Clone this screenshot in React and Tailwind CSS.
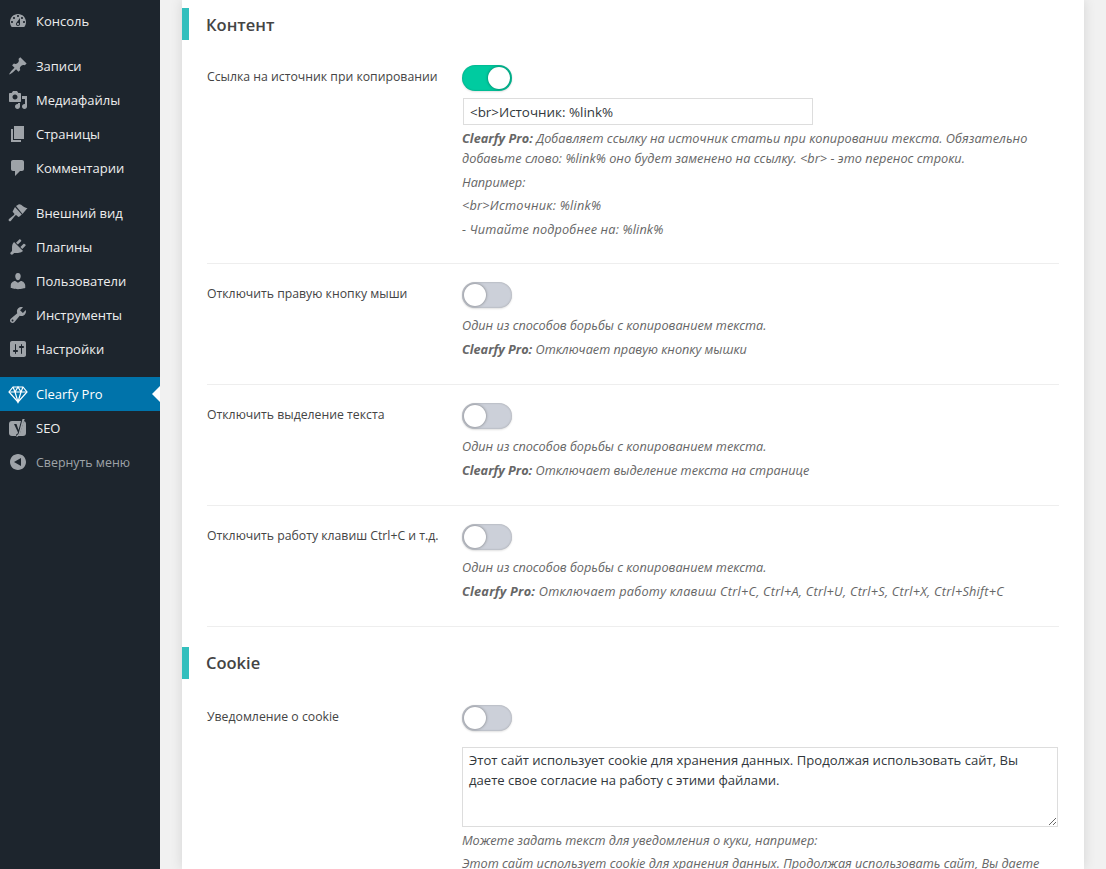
import React from "react";

const menuTop = [
  {
    label: "Консоль",
    d: "M3.76 16h12.48c1.1-1.37 1.76-3.11 1.76-5 0-4.42-3.58-8-8-8s-8 3.58-8 8c0 1.89.66 3.63 1.76 5zM10 4c.55 0 1 .45 1 1s-.45 1-1 1-1-.45-1-1 .45-1 1-1zM6 6c.55 0 1 .45 1 1s-.45 1-1 1-1-.45-1-1 .45-1 1-1zm8 0c.55 0 1 .45 1 1s-.45 1-1 1-1-.45-1-1 .45-1 1-1zm-5.37 5.55L12 7v6c0 1.1-.9 2-2 2s-2-.9-2-2c0-.57.24-1.08.63-1.45zM4 10c.55 0 1 .45 1 1s-.45 1-1 1-1-.45-1-1 .45-1 1-1zm12 0c.55 0 1 .45 1 1s-.45 1-1 1-1-.45-1-1 .45-1 1-1zm-5 3c0-.55-.45-1-1-1s-1 .45-1 1 .45 1 1 1 1-.45 1-1z",
  },
];

const menuContent = [
  {
    label: "Записи",
    d: "M10.44 3.02l1.82-1.82 6.36 6.35-1.83 1.82c-1.05-.68-2.48-.57-3.41.36l-.75.75c-.92.93-1.04 2.35-.35 3.41l-1.83 1.82-2.41-2.41-2.8 2.79c-.42.42-3.38 2.71-3.8 2.29s1.86-3.39 2.28-3.81l2.79-2.79L4.1 9.36l1.83-1.82c1.05.69 2.48.57 3.4-.36l.75-.75c.93-.92 1.05-2.35.36-3.41z",
  },
  {
    label: "Медиафайлы",
    d: "M13 11V4c0-.55-.45-1-1-1h-1.67L9 1H5L3.67 3H2c-.55 0-1 .45-1 1v7c0 .55.45 1 1 1h10c.55 0 1-.45 1-1zM7 4.5c1.38 0 2.5 1.12 2.5 2.5S8.38 9.5 7 9.5 4.5 8.38 4.5 7 5.62 4.5 7 4.5zM14 6h5v10.5c0 1.38-1.12 2.5-2.5 2.5S14 17.88 14 16.5s1.12-2.5 2.5-2.5c.17 0 .34.02.5.05V9h-3V6zm-4 8.05V13h2v3.5c0 1.38-1.12 2.5-2.5 2.5S7 17.88 7 16.5 8.12 14 9.5 14c.17 0 .34.02.5.05z",
  },
  { label: "Страницы", d: "M6 15V2h10v13H6zm-1 1h8v2H3V5h2v11z" },
  {
    label: "Комментарии",
    d: "M5 2h9c1.1 0 2 .9 2 2v7c0 1.1-.9 2-2 2h-2l-5 5v-5H5c-1.1 0-2-.9-2-2V4c0-1.1.9-2 2-2z",
  },
];

const menuSystem = [
  {
    label: "Внешний вид",
    d: "M8 3L10.500 1.500C12 1 13.500 2 15 3.200C16.500 4.400 18 5 19.500 5L14.500 11ZM7 4L13.800 11.500L11.500 13.500C11 14 10.300 14 9.800 13.500L8.800 12.500C8.300 12 7.700 12 7.200 12.500L2.800 18C2.200 18.600 1.300 18.300 .9 17.800C.5 17.300 .5 16.500 1 16L6 12C6.500 11.500 6.500 10.800 6 10.300L5 9.300C4.500 8.800 4.500 8.200 5 7.700Z",
  },
  {
    label: "Плагины",
    d: "M13.11 4.36L9.87 7.6 8 5.73l3.24-3.24c.35-.34 1.05-.2 1.56.32.52.51.66 1.21.31 1.55zm-8 1.77l.91-1.12 9.01 9.01-1.19.84c-.71.71-2.63 1.16-3.82 1.16H6.14L4.9 17.26c-.59.59-1.54.59-2.12 0-.59-.58-.59-1.53 0-2.12l1.24-1.24v-3.88c0-1.13.4-3.19 1.09-3.89zm7.26 3.97l3.24-3.24c.34-.35 1.04-.21 1.55.31.52.51.66 1.21.31 1.55l-3.24 3.25z",
  },
  {
    label: "Пользователи",
    d: "M10 9.25c-2.27 0-2.73-3.44-2.73-3.44C7 4.02 7.82 2 9.97 2c2.16 0 2.98 2.02 2.71 3.81 0 0-.41 3.44-2.68 3.44zm0 2.57L12.72 10c2.39 0 4.52 2.33 4.52 4.53v2.49s-3.65 1.13-7.24 1.13c-3.65 0-7.24-1.13-7.24-1.13v-2.49c0-2.25 1.94-4.48 4.47-4.48z",
  },
  {
    label: "Инструменты",
    d: "M16.68 9.77c-1.34 1.34-3.3 1.67-4.95.99l-5.41 6.52c-.99.99-2.59.99-3.58 0s-.99-2.59 0-3.57l6.52-5.42c-.68-1.65-.35-3.61.99-4.95 1.28-1.28 3.12-1.62 4.72-1.06l-2.89 2.89 2.82 2.82 2.86-2.87c.53 1.58.18 3.39-1.08 4.65zM3.81 16.21c.4.39 1.04.39 1.43 0 .4-.4.4-1.04 0-1.43-.39-.4-1.03-.4-1.43 0-.39.39-.39 1.03 0 1.43z",
  },
  {
    label: "Настройки",
    d: "M18 16V4c0-1.1-.9-2-2-2H4c-1.1 0-2 .9-2 2v12c0 1.1.9 2 2 2h12c1.1 0 2-.9 2-2zM8 11h1c.55 0 1 .45 1 1s-.45 1-1 1H8v1.5c0 .28-.22.5-.5.5s-.5-.22-.5-.5V13H6c-.55 0-1-.45-1-1s.45-1 1-1h1V5.5c0-.28.22-.5.5-.5s.5.22.5.5V11zm5-2h-1c-.55 0-1-.45-1-1s.45-1 1-1h1V5.5c0-.28.22-.5.5-.5s.5.22.5.5V7h1c.55 0 1 .45 1 1s-.45 1-1 1h-1v5.5c0 .28-.22.5-.5.5s-.5-.22-.5-.5V9z",
  },
];

const MenuItem = ({ label, d, muted }) => (
  <li className="flex h-[34px] items-center">
    <span className="flex w-9 justify-center">
      <svg viewBox="0 0 20 20" className="h-5 w-5 fill-[#9ea3a8]">
        <path d={d} />
      </svg>
    </span>
    <span className={muted ? "pt-[2px] text-[12.4px] text-[#9ea3a8]" : "pt-[2px] text-[#eeeeee]"}>{label}</span>
  </li>
);

const DiamondIcon = () => (
  <svg viewBox="0 0 20 20" className="h-5 w-5 fill-none stroke-white stroke-[1.2]">
    <path d="M5 3h10l4 5-9 10L1 8z" />
    <path d="M1 8h18M7 8l3 10 3-10M5 3l2 5 3-5 3 5 2-5" />
  </svg>
);

const YoastIcon = () => (
  <svg viewBox="0 0 20 20" className="h-5 w-5">
    <rect x="1" y="3" width="17" height="15" rx="3" fill="#9ea3a8" />
    <path d="M6 6h2.500l2 6 2-7 1-4h3l-4.500 14c-.6 1.900-1.800 3-4 3.500v-2c1.200-.4 1.800-1 2-2z" fill="#1d252d" />
    <path d="M14.500 1h2.200l-4.600 14.500c-.6 1.800-1.800 3-3.600 3.500v-1.500c1.100-.4 1.900-1.200 2.300-2.500z" fill="#9ea3a8" />
  </svg>
);

const Sidebar = () => (
  <aside className="w-40 shrink-0 bg-[#1d252d] pt-1 font-['Open_Sans',sans-serif] text-[13px]">
    <ul>
      {menuTop.map((m) => <MenuItem key={m.label} {...m} />)}
    </ul>
    <ul className="mt-[11px]">
      {menuContent.map((m) => <MenuItem key={m.label} {...m} />)}
    </ul>
    <ul className="mt-[11px]">
      {menuSystem.map((m) => <MenuItem key={m.label} {...m} />)}
    </ul>
    <ul className="mt-[11px]">
      <li className="relative flex h-[34px] items-center bg-[#0073aa] text-white">
        <span className="flex w-9 justify-center"><DiamondIcon /></span>
        <span className="pt-[2px]">Clearfy Pro</span>
        <span className="absolute right-0 top-[9px] border-y-8 border-r-8 border-y-transparent border-r-white" />
      </li>
      <li className="flex h-[34px] items-center text-[#eeeeee]">
        <span className="flex w-9 justify-center"><YoastIcon /></span>
        <span className="pt-[2px]">SEO</span>
      </li>
      <MenuItem
        label="Свернуть меню"
        muted
        d="M18 10c0-4.420-3.580-8-8-8s-8 3.580-8 8 3.580 8 8 8 8-3.580 8-8zm-5-4v8l-7-4z"
      />
    </ul>
  </aside>
);

const Toggle = ({ on }) => (
  <div
    className={
      on
        ? "flex h-[26px] w-[50px] items-center justify-end rounded-full bg-[#00cba0] pr-[2px] shadow-[inset_0_0_2px_rgba(0,0,0,0.25),0_1px_2px_rgba(0,0,0,0.12)]"
        : "flex h-[26px] w-[50px] items-center rounded-full bg-[#ccd0d9] pl-[2px] shadow-[inset_0_0_2px_rgba(0,0,0,0.25),0_1px_2px_rgba(0,0,0,0.12)]"
    }
  >
    <span className="h-[22px] w-[22px] rounded-full bg-white shadow-[0_0_3px_rgba(0,0,0,0.45)]" />
  </div>
);

const Heading = ({ children, className }) => (
  <h3 className={`flex h-8 items-center border-l-[7px] border-[#33bfbd] pl-[17px] pt-[2px] text-[16.5px] font-semibold text-[#444444] ${className}`}>
    {children}
  </h3>
);

const Help = ({ children, className = "" }) => (
  <p className={`mt-[4.3px] text-[12.7px] italic leading-[19.5px] text-[#666666] ${className}`}>{children}</p>
);

const Brand = () => <b className="font-bold">Clearfy Pro:</b>;

const Row = ({ label, on, children, last, first }) => (
  <div
    className={
      last
        ? "mx-[25px] flex pt-[18px]"
        : first
          ? "mx-[25px] flex border-b border-[#eeeeee] pb-[23px] pt-[18px]"
          : "mx-[25px] flex border-b border-[#eeeeee] pb-[24.2px] pt-[18px]"
    }
  >
    <div className="w-[255px] shrink-0 pt-[2px] text-[12.25px] leading-[19px] text-[#444444]">{label}</div>
    <div className="min-w-0 flex-1">
      <Toggle on={on} />
      {children}
    </div>
  </div>
);

const ProtectHelp = ({ text, className }) => (
  <div className="mt-[8.5px]">
    <Help>Один из способов борьбы с копированием текста.</Help>
    <Help className={className}><Brand /> {text}</Help>
  </div>
);

export default function App() {
  return (
    <div className="flex h-[869px] w-[1106px] overflow-hidden bg-[#f1f1f1]">
      <Sidebar />
      <main className="ml-[22px] w-[902px] bg-white pt-2 font-['Open_Sans',sans-serif] shadow-[0_0_12px_rgba(0,0,0,0.12)]">
        <Heading>Контент</Heading>
        <div className="h-[7px]" />
        <Row label="Ссылка на источник при копировании" on first>
          <input
            readOnly
            value="<br>Источник: %link%"
            className="ml-px mt-[7px] block h-[27px] w-[350px] border border-[#dddddd] px-[6px] font-['Open_Sans',sans-serif] text-[13.4px] text-[#32373c] outline-none"
          />
          <Help className="tracking-[0.05px]">
            <Brand /> Добавляет ссылку на источник статьи при копировании текста. Обязательно добавьте слово: %link% оно будет заменено на ссылку. &lt;br&gt; - это перенос строки.
          </Help>
          <Help>Например:</Help>
          <Help className="tracking-[0.25px]">&lt;br&gt;Источник: %link%</Help>
          <Help className="tracking-[0.16px]">- Читайте подробнее на: %link%</Help>
        </Row>
        <Row label="Отключить правую кнопку мыши">
          <ProtectHelp text="Отключает правую кнопку мышки" />
        </Row>
        <Row label="Отключить выделение текста">
          <ProtectHelp text="Отключает выделение текста на странице" />
        </Row>
        <Row label="Отключить работу клавиш Ctrl+C и т.д.">
          <ProtectHelp
            className="tracking-[0.25px]"
            text="Отключает работу клавиш Ctrl+C, Ctrl+A, Ctrl+U, Ctrl+S, Ctrl+X, Ctrl+Shift+C"
          />
        </Row>
        <Heading className="mt-5">Cookie</Heading>
        <div className="h-2" />
        <Row label="Уведомление о cookie" last>
          <textarea
            readOnly
            defaultValue="Этот сайт использует cookie для хранения данных. Продолжая использовать сайт, Вы даете свое согласие на работу с этими файлами."
            className="mt-4 block h-20 w-[596px] border border-[#dddddd] px-[6px] py-[2px] font-['Open_Sans',sans-serif] text-[13.1px] leading-[20px] text-[#32373c] outline-none"
          />
          <Help className="-mb-px">Можете задать текст для уведомления о куки, например:</Help>
          <Help>Этот сайт использует cookie для хранения данных. Продолжая использовать сайт, Вы даете свое согласие на работу с этими файлами.</Help>
        </Row>
      </main>
    </div>
  );
}
